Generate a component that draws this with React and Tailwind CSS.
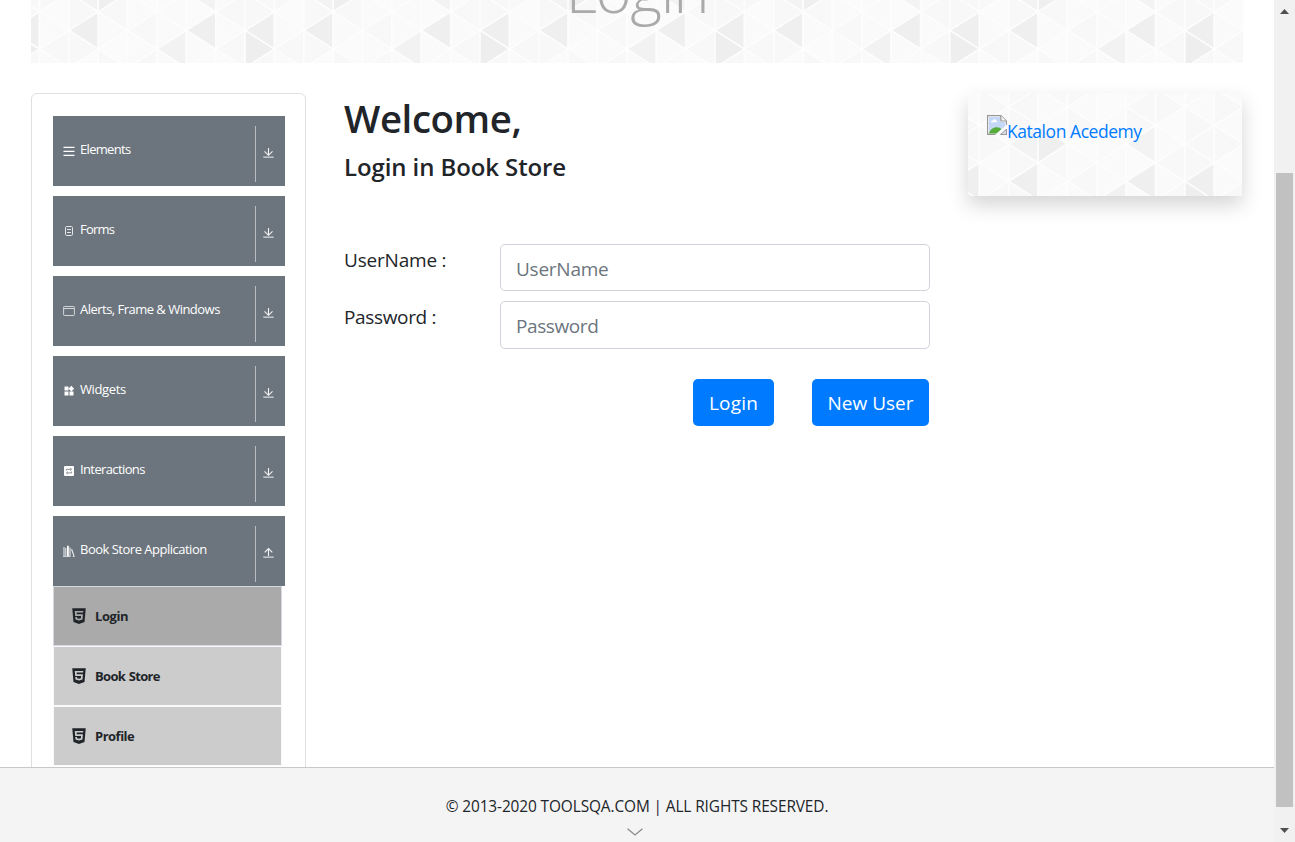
import React from "react";
import { FaHtml5 } from "react-icons/fa";
import { MdWidgets } from "react-icons/md";

const COL = 29.37;
const ROW = 18.67;

// Shade of one triangle in the repeating 8-column mosaic.
function shade(k, n) {
  const c = ((k % 8) + 8) % 8;
  if (n === 1 && (c === 1 || c === 5 || c === 7)) return "#efefef";
  if (n === 2 && c === 7) return "#eeeeee";
  if (n === 2 && c === 4) return "#f2f2f2";
  if (n === -1 && c === 2) return "#efefef";
  if (n === -1 && (c === 1 || c === 5)) return "#f3f3f3";
  return ["#fbfbfb", "#f8f8f8", "#fafafa", "#f8f8f8", "#fafafa"][(((c * 3 + n * 4 + ((c * n) % 3)) % 5) + 5) % 5];
}

function Mosaic({ x, y, width, height }) {
  const tris = [];
  const k0 = Math.floor((x - 39.5) / COL) - 1;
  const k1 = Math.ceil((x + width - 39.5) / COL);
  for (let k = k0; k <= k1; k++) {
    for (let n = -5; n <= 4; n++) {
      const xl = 39.5 + COL * k;
      const xr = xl + COL;
      const yc = 11.8 + ROW * n;
      const left = Math.abs(k + n) % 2 === 0;
      const points = left
        ? `${xl},${yc} ${xr},${yc - ROW} ${xr},${yc + ROW}`
        : `${xr},${yc} ${xl},${yc - ROW} ${xl},${yc + ROW}`;
      tris.push(<polygon key={`${k}:${n}`} points={points} fill={shade(k, n)} />);
    }
  }
  return (
    <svg className="absolute inset-0 h-full w-full" viewBox={`${x} ${y} ${width} ${height}`} preserveAspectRatio="none" aria-hidden="true">
      <g stroke="#fdfdfd" strokeWidth="1.5">{tris}</g>
    </svg>
  );
}

const IconBars = () => (
  <svg width="12" height="12" viewBox="0 0 12 12" fill="none" stroke="#fff" strokeWidth="1.3">
    <path d="M.5 2.4h11M.5 6.4h11M.5 10.4h11" />
  </svg>
);
const IconForm = () => (
  <svg width="12" height="12" viewBox="0 0 12 12" fill="none" stroke="#e4e6e8" strokeWidth="1">
    <rect x="2.5" y="1.5" width="7" height="9" rx="1.2" />
    <path d="M4 4.5h4M4 7.5h4" />
  </svg>
);
const IconWindow = () => (
  <svg width="12" height="12" viewBox="0 0 12 12" fill="none" stroke="#d3d6d9" strokeWidth="1">
    <rect x=".6" y="1.5" width="10.8" height="9" rx=".8" />
    <path d="M1 3.5h10" />
  </svg>
);
const IconInteract = () => (
  <svg width="12" height="12" viewBox="0 0 12 12">
    <rect x="1" y="1" width="10" height="10" rx="1" fill="#fff" />
    <path d="M3.4 5.5V4.3h4.4M8.6 6.5v1.4H4.2M7.2 3.1l1.4 1.2-1.4 1.2M4.8 6.7 3.4 7.9l1.4 1.2" fill="none" stroke="#6c757d" strokeWidth=".8" />
  </svg>
);
const IconBooks = () => (
  <svg width="12" height="12" viewBox="0 0 12 12" fill="none" stroke="#fff">
    <path d="M1 2v9.6M2.8 3v8.6" strokeWidth="1.1" opacity=".8" />
    <path d="M4.9.8v10.8" strokeWidth="1.8" />
    <path d="M7 2.5v9" strokeWidth="1" opacity=".9" />
    <path d="M8.600 4.2l2.5 7.2" strokeWidth="1.1" opacity=".9" />
    <path d="M0 11.5h7.6M9.6 11.5h2.2" strokeWidth=".8" opacity=".7" />
  </svg>
);

const Arrow = ({ up }) => (
  <svg width="12" height="12" viewBox="0 0 12 12" fill="none" stroke="#f4f5f6" strokeWidth="1.1">
    <path d={up ? "M6.5 9V2M2.7 5.4l3.8-3.8 3.8 3.8" : "M6.5 1v7M2.5 4.4l4 3.9 4-3.9"} />
    <path d="M1.3 10.2h10.4" strokeWidth="1.6" stroke="#c0c4c8" />
  </svg>
);

const groups = [
  { label: "Elements", icon: <IconBars />, track: "tracking-[-0.68px]" },
  { label: "Forms", icon: <IconForm />, track: "tracking-[-0.8px]" },
  { label: "Alerts, Frame & Windows", icon: <IconWindow />, track: "tracking-[-0.52px]" },
  { label: "Widgets", icon: <MdWidgets size={12} color="#fff" />, track: "tracking-[-0.38px]" },
  { label: "Interactions", icon: <IconInteract />, track: "tracking-[-0.62px]" },
  { label: "Book Store Application", icon: <IconBooks />, track: "tracking-[-0.5px]", open: true },
];

const entries = [
  { label: "Login", style: "bg-[#aaaaaa] border-[#d5d8de]", track: "tracking-[-0.45px]" },
  { label: "Book Store", style: "bg-[#cccccc] border-[#f8f9fb]", track: "tracking-[-0.7px] [word-spacing:1px]" },
  { label: "Profile", style: "bg-[#cccccc] border-[#f8f9fb]", track: "tracking-[-0.5px]" },
];

function Group({ label, icon, track, open }) {
  return (
    <div className="flex h-[70px] shrink-0 bg-[#6c757d] py-2.5 text-white">
      <div className="flex h-[48px] w-[202px] items-center pl-2.5">
        <span className="mt-[1px] flex w-[17px] shrink-0">{icon}</span>
        <span className={`-mt-[3px] whitespace-nowrap text-[13px] leading-5 ${track}`}>{label}</span>
      </div>
      <div className="flex h-[56px] w-[30px] border-l border-[#b9bdc1] pl-[6px] pt-[21px]">
        <Arrow up={open} />
      </div>
    </div>
  );
}

function BrokenImage() {
  return (
    <svg className="shrink-0" width="20" height="20" viewBox="0 0 20 20" aria-hidden="true">
      <path d="M.6.6h13.2l5.6 5.4v13.4H.6z" fill="#fff" stroke="#969696" strokeWidth="1.2" />
      <path d="M2 2h11v5h5v6l-8 5.5H2z" fill="#c5d7f7" />
      <path d="M4 7.2c0-1.3 1-1.8 1.8-1.6.6-1.8 3-1.6 3.3.1 1.2 0 1.4 1.5.6 1.5z" fill="#fff" />
      <path d="M2 18.6c1-4.2 4.5-6.6 8-6.4 2 .1 3.5.9 4.5 2l-5 4.400z" fill="#56ad3a" />
      <path d="M8 20 20 9.5v4L13.5 20z" fill="#fafafa" />
      <path d="M13.8.6V6h5.6" fill="#f4f4f4" stroke="#969696" strokeWidth="1.2" />
      <path d="M13.5 19.4h5.9v-5z" fill="#dfe6f2" stroke="#969696" strokeWidth="1" />
    </svg>
  );
}

export default function App() {
  return (
    <div className="flex h-[842px] w-[1295px] overflow-hidden bg-white font-['Open_Sans','Noto_Sans',sans-serif] text-[#212529]">
      <div className="flex w-[1274px] flex-col">
        <div className="flex h-[767px] flex-col overflow-hidden px-[31px]">
          <header className="relative h-[63px] w-[1212px] shrink-0 overflow-hidden">
            <Mosaic x={31} y={0} width={1212} height={63} />
            <div className="relative -mt-[50px] text-center text-[61px] font-light leading-[80px] tracking-[-1.2px] text-[#aaaaaa]">Login</div>
          </header>

          <div className="mt-[30px] flex flex-1 items-start">
            <nav className="flex h-[720px] w-[275px] shrink-0 flex-col gap-2.5 rounded-md border border-[#dee0e2] px-[21px] pt-[22px] pb-4">
              {groups.map((g) => (
                <div key={g.label} className="w-[232px]">
                  <Group {...g} />
                  {g.open && (
                    <ul className="w-[229px]">
                      {entries.map((e) => (
                        <li key={e.label} className={`flex h-[60px] items-center border pl-[18px] ${e.style}`}>
                          <FaHtml5 size={18} className="w-[14px] shrink-0" />
                          <span className={`ml-[9px] whitespace-nowrap text-[13px] font-bold leading-5 ${e.track}`}>{e.label}</span>
                        </li>
                      ))}
                    </ul>
                  )}
                </div>
              ))}
            </nav>

            <main className="ml-[38px] w-[586px]">
              <h2 className="mt-[2px] text-[38.4px] font-semibold leading-[46px] tracking-[-0.4px]">Welcome,</h2>
              <h5 className="mt-[11px] text-[24px] font-semibold leading-[30px] tracking-[-0.1px]">Login in Book Store</h5>
              <form className="mt-[62px]" onSubmit={(e) => e.preventDefault()}>
                <div className="flex h-[47px]">
                  <label className="w-[156px] pt-[2px] text-[19px] leading-[29px] tracking-[-0.2px]">UserName :</label>
                  <input className="w-[430px] rounded-[5px] border border-[#ced4da] px-[15px] pt-[3px] text-[19px] tracking-[-0.25px] placeholder:text-[#6c757d]" placeholder="UserName" />
                </div>
                <div className="mt-[10px] flex h-[48px]">
                  <label className="w-[156px] pt-[2px] text-[19px] leading-[29px] tracking-[-0.35px]">Password :</label>
                  <input type="password" className="w-[430px] rounded-[5px] border border-[#ced4da] px-[15px] pt-[2px] text-[19px] tracking-[-0.4px] placeholder:text-[#6c757d]" placeholder="Password" />
                </div>
                <div className="mt-[30px] flex justify-end gap-[38px] pr-[1px]">
                  <button className="h-[47px] w-[81px] rounded-[5px] bg-[#007bff] pt-[1px] text-[19px] tracking-[0.2px] text-white">Login</button>
                  <button className="h-[47px] w-[117px] whitespace-nowrap rounded-[5px] bg-[#007bff] pt-[1px] text-[19px] text-white">New User</button>
                </div>
              </form>
            </main>

            <aside className="relative ml-[38px] h-[103px] w-[274px] shadow-[0_9px_19px_rgba(0,0,0,0.17)]">
              <Mosaic x={968} y={-58} width={274} height={103} />
              <a className="relative flex items-start pl-[19px] pt-[22px] text-[17.5px] leading-[32px] tracking-[-0.45px] text-[#007bff]">
                <BrokenImage />
                <span className="whitespace-nowrap">Katalon Acedemy</span>
              </a>
            </aside>
          </div>
        </div>

        <footer className="flex h-[75px] flex-col items-center border-t border-[#c8c8c8] bg-[#f4f4f4]">
          <p className="mt-[28px] text-[15.4px] leading-[22px] tracking-[-0.1px]">© 2013-2020 TOOLSQA.COM | ALL RIGHTS RESERVED.</p>
          <svg className="ml-[-4px] mt-[10px]" width="16" height="8" viewBox="0 0 16 8" fill="none" stroke="#8c8c8c" strokeWidth="1.3">
            <path d="M.5.8 8 7 15.5.8" />
          </svg>
        </footer>
      </div>

      <div className="flex w-[21px] flex-col items-center bg-[#f1f1f1]">
        <svg className="mt-[9px]" width="9" height="5" viewBox="0 0 9 5"><path d="M0 5 4.5 0 9 5z" fill="#505050" /></svg>
        <div className="mt-[159px] h-[634px] w-[17px] bg-[#c1c1c1]" />
        <svg className="mt-[21px]" width="9" height="5" viewBox="0 0 9 5"><path d="M0 0h9L4.5 5z" fill="#505050" /></svg>
      </div>
    </div>
  );
}
